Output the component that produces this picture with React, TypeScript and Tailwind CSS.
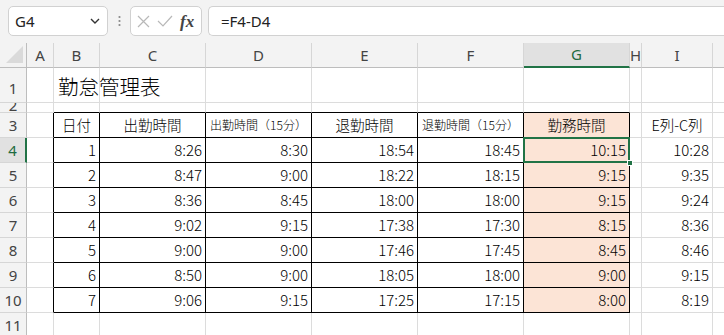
import React from 'react';

const COLS = ['A', 'B', 'C', 'D', 'E', 'F', 'G', 'H', 'I'];
const ROW_H = [35, 10, 25, 25, 25, 25, 25, 25, 25, 25, 25];

const data = {
  C: ['8:26', '8:47', '8:36', '9:02', '9:00', '8:50', '9:06'],
  D: ['8:30', '9:00', '8:45', '9:15', '9:00', '9:00', '9:15'],
  E: ['18:54', '18:22', '18:00', '17:38', '17:46', '18:05', '17:25'],
  F: ['18:45', '18:15', '18:00', '17:30', '17:45', '18:00', '17:15'],
  G: ['10:15', '9:15', '9:15', '8:15', '8:45', '9:00', '8:00'],
  I: ['10:28', '9:35', '9:24', '8:36', '8:46', '9:15', '8:19'],
};

const headers: Record<string, { text: string; small?: boolean }> = {
  B: { text: '日付' },
  C: { text: '出勤時間' },
  D: { text: '出勤時間（15分）', small: true },
  E: { text: '退勤時間' },
  F: { text: '退勤時間（15分）', small: true },
  G: { text: '勤務時間' },
  I: { text: 'E列-C列' },
};

const font = { fontFamily: '"Noto Sans CJK JP", "Noto Sans", sans-serif' };

function Cell({ row, col }: { row: number; col: string }) {
  const ci = COLS.indexOf(col); // A=0
  const inTableCol = ci >= 1 && ci <= 6;
  const rightBlack = row >= 3 && row <= 10 && ci >= 0 && ci <= 6;
  const bottomBlack = inTableCol && row >= 2 && row <= 10;
  const peach = col === 'G' && row >= 3 && row <= 10;
  const selected = col === 'G' && row === 4;

  let content: React.ReactNode = null;
  let align = 'justify-end pr-[3px]';
  if (row === 1 && col === 'B') {
    content = <span className="whitespace-nowrap text-[20.5px] leading-none pl-[4px] pb-[6px]">勤怠管理表</span>;
    align = 'justify-start items-end';
  } else if (row === 3 && headers[col]) {
    const h = headers[col];
    content = <span className={h.small ? 'text-[12px] whitespace-nowrap' : 'text-[14.5px] whitespace-nowrap'}>{h.text}</span>;
    align = 'justify-center';
  } else if (row >= 4 && row <= 10) {
    const i = row - 4;
    if (col === 'B') content = String(i + 1);
    else if ((data as Record<string, string[]>)[col]) content = (data as Record<string, string[]>)[col][i];
  }

  return (
    <div
      className={`relative flex items-center overflow-visible text-[15px] font-light text-black ${align} border-r border-b ${
        rightBlack ? 'border-r-black' : 'border-r-[#dcdcdc]'
      } ${bottomBlack ? 'border-b-black' : 'border-b-[#dcdcdc]'} ${peach ? 'bg-[#fce4d6]' : 'bg-white'} ${
        row === 1 && col === 'B' ? 'z-10' : ''
      }`}
    >
      {content}
      {selected && (
        <>
          <div className="absolute -left-[1px] -top-[1px] -right-[1px] -bottom-[1px] border-2 border-[#217346] z-20 pointer-events-none" />
          <div className="absolute -right-[4px] -bottom-[4px] w-[6px] h-[6px] bg-[#217346] border border-white z-30" />
        </>
      )}
    </div>
  );
}

export default function App() {
  return (
    <div className="w-[724px] h-[335px] overflow-hidden bg-[#f3f3f3]" style={font}>
      {/* formula bar */}
      <div className="h-[43px] flex items-start pt-[6px] pl-[8px] gap-0">
        <div className="w-[100px] h-[30px] bg-white border border-[#d1d1d1] rounded-[5px] flex items-center justify-between pl-[6px] pr-[6px]">
          <span className="text-[15px] text-[#222]" style={{ fontFamily: '"Noto Sans", sans-serif' }}>G4</span>
          <svg width="12" height="8" viewBox="0 0 12 8" fill="none">
            <path d="M2 2l4 4 4-4" stroke="#333" strokeWidth="1.4" />
          </svg>
        </div>
        <div className="w-[22px] h-[30px] flex items-center justify-center">
          <svg width="3" height="12" viewBox="0 0 3 12">
            <circle cx="1.5" cy="2" r="1.1" fill="#888" />
            <circle cx="1.5" cy="6" r="1.1" fill="#888" />
            <circle cx="1.5" cy="10" r="1.1" fill="#888" />
          </svg>
        </div>
        <div className="w-[72px] h-[30px] bg-white border border-[#d1d1d1] rounded-[5px] flex items-center pl-[6px] gap-[7px]">
          <svg width="13" height="13" viewBox="0 0 13 13" fill="none">
            <path d="M1 1l11 11M12 1L1 12" stroke="#b8b8b8" strokeWidth="1.2" />
          </svg>
          <svg width="16" height="12" viewBox="0 0 16 12" fill="none">
            <path d="M1 6l5 5L15 1" stroke="#b8b8b8" strokeWidth="1.2" />
          </svg>
          <span className="text-[17px] italic font-bold text-[#444] leading-none" style={{ fontFamily: '"Liberation Serif", serif' }}>
            fx
          </span>
        </div>
        <div className="ml-[6px] flex-1 h-[30px] bg-white border border-[#d1d1d1] border-r-0 rounded-l-[5px] flex items-center pl-[12px]">
          <span className="text-[15px] text-[#222]" style={{ fontFamily: '"Noto Sans", sans-serif' }}>=F4-D4</span>
        </div>
      </div>

      {/* sheet */}
      <div className="grid grid-cols-[27px_27px_46px_106px_106px_106px_106px_106px_12px_71px_1fr] grid-rows-[25px_35px_10px_25px_25px_25px_25px_25px_25px_25px_25px_25px]">
        {/* header row */}
        <div className="relative border-r border-b border-[#bdbdbd] bg-[#f3f3f3]">
          <svg className="absolute right-[3px] bottom-[4px]" width="17" height="17" viewBox="0 0 17 17">
            <path d="M17 0V17H0Z" fill="#dadada" />
          </svg>
        </div>
        {COLS.map((c) => (
          <div
            key={c}
            className={`flex items-center justify-center text-[15px] border-r border-r-[#d6d6d6] ${
              c === 'G'
                ? 'bg-[#e1e1e1] text-[#1e6b40] border-b-2 border-b-[#217346]'
                : 'bg-[#f3f3f3] text-[#444] border-b border-b-[#bdbdbd]'
            }`}
            style={{ fontFamily: '"Noto Sans", sans-serif' }}
          >
            {c}
          </div>
        ))}
        <div className="bg-[#f3f3f3] border-b border-b-[#bdbdbd]" />

        {ROW_H.map((_, ri) => {
          const row = ri + 1;
          return (
            <React.Fragment key={row}>
              <div
                className={`flex justify-center overflow-hidden text-[15px] border-b border-b-[#d6d6d6] ${
                  row === 4
                    ? 'bg-[#e1e1e1] text-[#1e6b40] border-r-2 border-r-[#217346]'
                    : 'bg-[#f3f3f3] text-[#444] border-r border-r-[#bdbdbd]'
                } ${row === 1 ? 'items-end pb-[3px]' : row === 2 ? 'items-end leading-[13px]' : 'items-center'}`}
                style={{ fontFamily: '"Noto Sans", sans-serif' }}
              >
                {row}
              </div>
              {COLS.map((c) => (
                <Cell key={c} row={row} col={c} />
              ))}
              <div className="bg-white border-b border-b-[#dcdcdc]" />
            </React.Fragment>
          );
        })}
      </div>
    </div>
  );
}
